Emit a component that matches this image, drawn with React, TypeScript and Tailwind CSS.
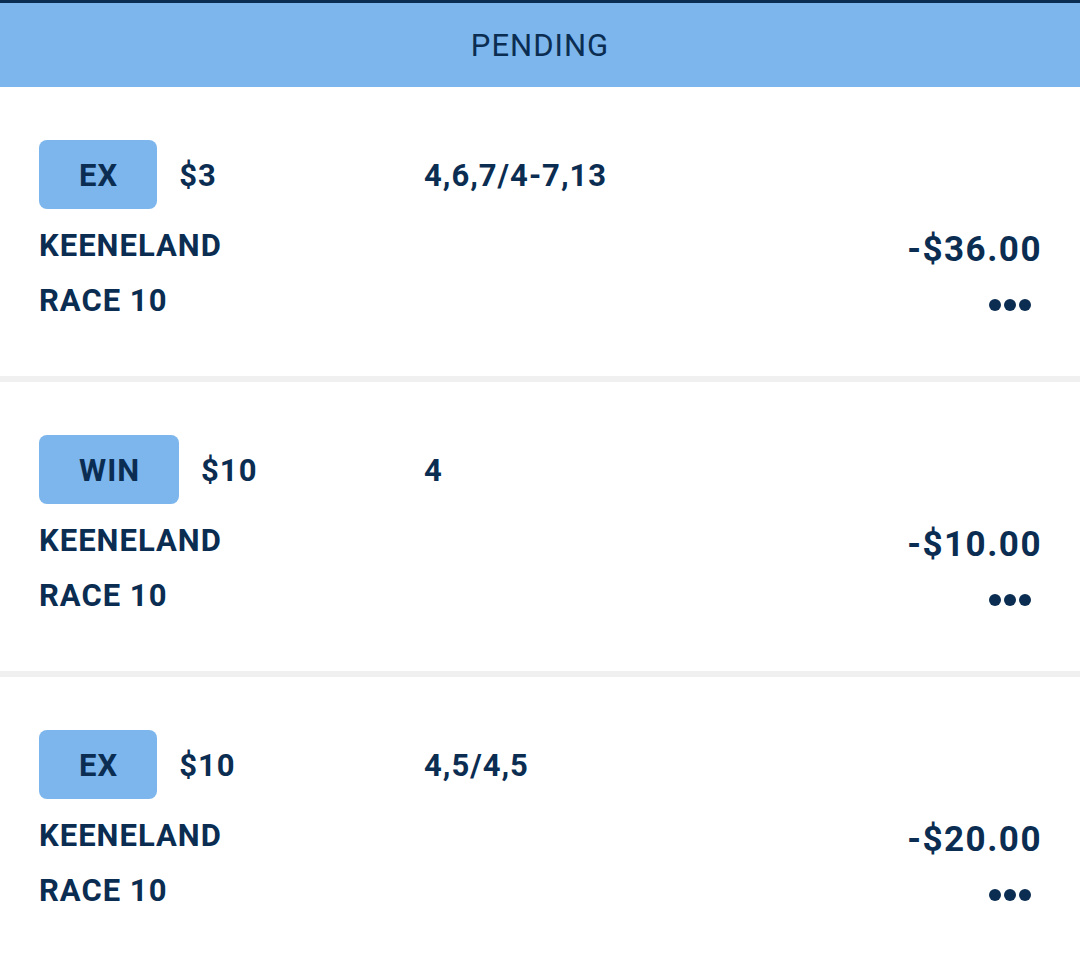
const bets = [
  { type: 'EX', stake: '$3', picks: '4,6,7/4-7,13', track: 'KEENELAND', race: 'RACE 10', amount: '-$36.00' },
  { type: 'WIN', stake: '$10', picks: '4', track: 'KEENELAND', race: 'RACE 10', amount: '-$10.00' },
  { type: 'EX', stake: '$10', picks: '4,5/4,5', track: 'KEENELAND', race: 'RACE 10', amount: '-$20.00' },
];

function BetCard({ bet }: { bet: (typeof bets)[number] }) {
  return (
    <div className="bg-white pb-[55px] pl-[39px] pr-[40px] pt-[53px] text-[#0b2d52]">
      <div className="flex h-[69px] items-center">
        <div className="flex w-[385px] items-center">
          <span className="flex h-[69px] items-center rounded-[8px] bg-[#7cb6ec] pl-[40px] pr-[39px] pt-[3px] text-[31px] font-bold tracking-[1px]">
            {bet.type}
          </span>
          <span className="ml-[22px] pt-[3px] text-[31px] font-bold tracking-[1px]">{bet.stake}</span>
        </div>
        <span className="pt-[3px] text-[31px] font-bold tracking-[1px]">{bet.picks}</span>
      </div>
      <div className="mt-[17px] flex h-[40px] items-center justify-between">
        <span className="text-[31px] font-bold leading-[40px] tracking-[1px]">{bet.track}</span>
        <span className="-mr-[2px] mt-[8px] text-[35px] font-bold leading-[40px] tracking-[1.5px]">{bet.amount}</span>
      </div>
      <div className="mt-[15px] flex h-[40px] items-center justify-between">
        <span className="text-[31px] font-bold leading-[40px] tracking-[1px]">{bet.race}</span>
        <div className="mr-[9px] mt-[8px] flex gap-[3px]">
          <span className="h-[12px] w-[12px] rounded-full bg-[#0b2d52]" />
          <span className="h-[12px] w-[12px] rounded-full bg-[#0b2d52]" />
          <span className="h-[12px] w-[12px] rounded-full bg-[#0b2d52]" />
        </div>
      </div>
    </div>
  );
}

export default function App() {
  return (
    <main className="min-h-screen bg-white font-['Roboto',sans-serif]">
      <div className="h-[3px] bg-[#0b2d52]" />
      <div className="flex h-[84px] items-center justify-center bg-[#7cb6ec] pt-[3px] text-[31px] tracking-[1px] text-[#0b2d52]">
        PENDING
      </div>
      <div className="flex flex-col gap-[6px] bg-[#f0f0f0]">
        {bets.map((bet, i) => (
          <BetCard key={i} bet={bet} />
        ))}
      </div>
    </main>
  );
}
